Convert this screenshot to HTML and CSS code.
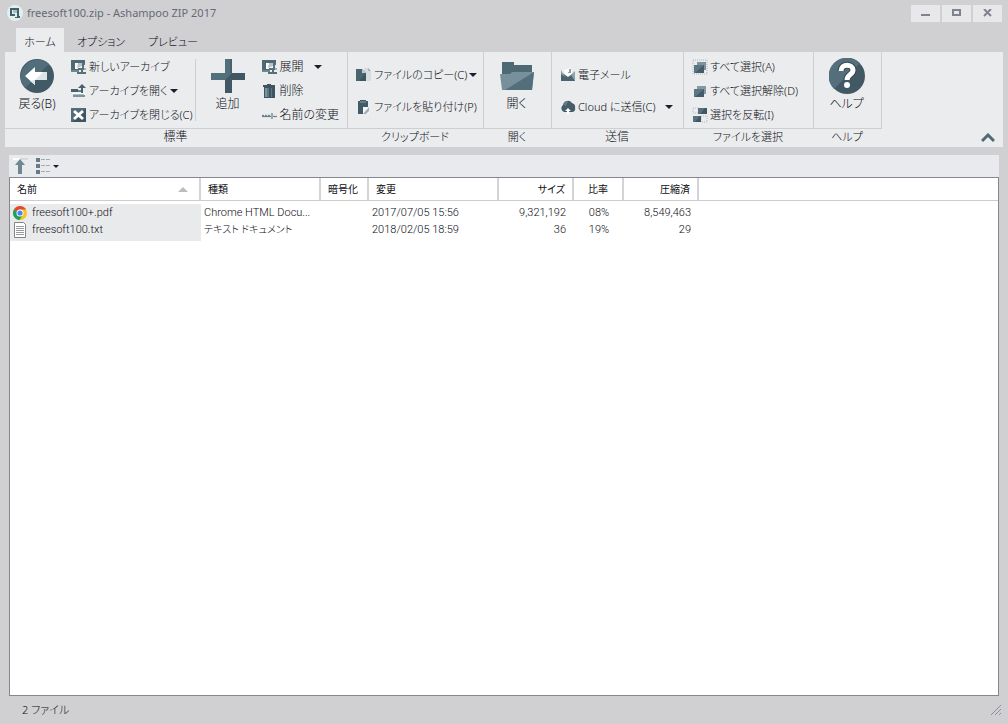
FILE: index.html
```html
<!DOCTYPE html>
<html lang="ja">
<head>
<meta charset="utf-8">
<title>freesoft100.zip - Ashampoo ZIP 2017</title>
<link rel="stylesheet" href="styles.css">
</head>
<body>
<svg class="defs" aria-hidden="true">
  <symbol id="clamp" viewBox="0 0 16 16">
    <path fill="#4f6872" d="M0 1h14v3H4v6h4v3H0z"/>
    <path fill="#6f8892" d="M0 11h8v2H0z"/>
    <path fill="#f8fafb" d="M4 4h7v6H4z"/>
    <path fill="#b4c4ca" d="M7 4h4v3L6 9z"/>
    <path fill="#587079" d="M11 4h3v2h-1v3h2v2h-3v2h3v2H6v-2h4v-2H7V9h4z"/>
    <path fill="#a2b2b8" d="M13 9h2v2h-2z"/>
  </symbol>
  <symbol id="caret" viewBox="0 0 8 4"><path fill="#1d1d2b" d="M0 0h8L4 4z"/></symbol>
</svg>
<div class="window">
  <header class="titlebar">
    <svg class="app-icon" viewBox="0 0 16 16"><circle cx="8" cy="8" r="8" fill="#e3eeef"/><path fill="#3f606c" d="M3 3h9v2H5v4h3v2H3z"/><path fill="#a5bfc8" d="M6 5h4v3H6z"/><path fill="#3f606c" d="M10 5h2v6h1v2H8v-1h2z"/></svg>
    <h1 class="title">freesoft100.zip - Ashampoo ZIP 2017</h1>
    <div class="window-buttons">
      <button class="window-button" aria-label="最小化"><svg viewBox="0 0 10 8"><path fill="#7f8390" d="M0 5h9v2H0z"/></svg></button>
      <button class="window-button" aria-label="最大化"><svg viewBox="0 0 10 8"><path fill="none" stroke="#7f8390" stroke-width="2" d="M1 1h7v5H1z"/></svg></button>
      <button class="window-button" aria-label="閉じる"><svg viewBox="0 0 10 8"><path stroke="#7f8390" stroke-width="2" d="M1 0l7 7M8 0L1 7"/></svg></button>
    </div>
  </header>

  <nav class="tabs" role="tablist">
    <button class="tab tab-active" role="tab" aria-selected="true">ホーム</button>
    <button class="tab" role="tab">オプション</button>
    <button class="tab" role="tab">プレビュー</button>
  </nav>

  <div class="ribbon">
    <section class="group">
      <div class="group-body group-standard">
        <button class="big">
          <svg class="icon-big" viewBox="0 0 36 36"><circle cx="18" cy="18" r="17" fill="#425a65"/><path fill="#536e7a" d="M6 30A17 17 0 0 1 30 6z"/><path fill="#fff" d="M6 18l10-9v5h12v8H16v5z"/><path fill="#dfe4e6" d="M16 22l8-8h4v8zM16 22v5l-5-4z"/></svg>
          <span>戻る(B)</span>
        </button>
        <div class="stack">
          <button class="small"><svg class="icon"><use href="#clamp"/></svg><span>新しいアーカイブ</span></button>
          <button class="small"><svg class="icon" viewBox="0 0 16 16"><path fill="#48616c" d="M0 6h7v3H0zM11 1l4 4h-3v5h-2V5H7z"/><path fill="#6b828c" d="M7 7h3v2H7z"/><path fill="#fff" d="M1 10h13v1H1z"/><path fill="#a9b8be" d="M2 11h11v1H2z"/><path fill="#7e939c" d="M2 12h12v2H2z"/></svg><span>アーカイブを開く</span><svg class="caret caret-near"><use href="#caret"/></svg></button>
          <button class="small"><svg class="icon" viewBox="0 0 16 16"><path fill="#536d78" d="M0 1h15v14H0z"/><path fill="#3f5661" d="M15 1v14H1z"/><path stroke="#fff" stroke-width="3" d="M3 4l9 8M12 4l-9 8"/></svg><span>アーカイブを閉じる(C)</span></button>
        </div>
        <div class="separator"></div>
        <button class="big">
          <svg class="icon-big" viewBox="0 0 36 36"><path fill="#536f7b" d="M15 1h7v14h13v7H22v13h-7V22H1v-7h14z"/><path fill="#405863" d="M22 15h13v7H22v13h-7V22z"/><path fill="#48616c" d="M20 1h2v14h-2z"/></svg>
          <span>追加</span>
        </button>
        <div class="stack">
          <button class="small"><svg class="icon"><use href="#clamp"/></svg><span class="kanji">展開</span><svg class="caret"><use href="#caret"/></svg></button>
          <button class="small"><svg class="icon" viewBox="0 0 16 16"><path fill="#3e545f" d="M1 2h4V1h4v1h4v2H1zM2 4h11v11H2z"/><path fill="#7895a0" d="M3 5h2v9H3z"/><path fill="#5e7985" d="M5 5h2v9H5zM9 5h1v9H9z"/></svg><span class="kanji">削除</span></button>
          <button class="small"><svg class="icon" viewBox="0 0 16 16"><path fill="#dde2e4" d="M0 7h15v4H0z"/><path fill="#6b8089" d="M0 8h2v1H0zM3 8h2v1H3zM6 8h2v1H6zM0 9h9v1H0zM11 9h4v1h-4z"/><path fill="#9aa8ae" d="M9 6h2v6H9z"/></svg><span class="kanji">名前の変更</span></button>
        </div>
      </div>
      <h2 class="group-title kanji">標準</h2>
    </section>

    <section class="group">
      <div class="group-body group-pair">
        <button class="small"><svg class="icon" viewBox="0 0 16 16"><path fill="#d4dcdf" d="M8 1h4l3 3v10H8z"/><path fill="#a1b0b6" d="M12 1l3 3h-3z"/><path fill="#4b6570" d="M0 2h6l4 4v8H0z"/><path fill="#3e5560" d="M10 6v8H3z"/><path fill="#c0cbd0" d="M6 2l4 4H6z"/></svg><span>ファイルのコピー(C)</span><svg class="caret caret-near"><use href="#caret"/></svg></button>
        <button class="small"><svg class="icon" viewBox="0 0 16 16"><path fill="#435b66" d="M2 2h2V1h6v1h2v13H2z"/><path fill="#637e8a" d="M4 2h6v2H4z"/><path fill="#f4f7f8" d="M7 8h6v7H7z"/><path fill="#9fb0b7" d="M13 8v4l-3 3H7z"/></svg><span>ファイルを貼り付け(P)</span></button>
      </div>
      <h2 class="group-title">クリップボード</h2>
    </section>

    <section class="group">
      <div class="group-body group-single">
        <button class="big">
          <svg class="icon-big" viewBox="0 0 36 36"><path fill="#4e6974" d="M3 4h12v3h18v13H3z"/><path fill="#78909b" d="M1 16h10l2-2h22l-2 18H3z"/><path fill="#536f7b" d="M35 14l-2 18H6z"/></svg>
          <span>開く</span>
        </button>
      </div>
      <h2 class="group-title">開く</h2>
    </section>

    <section class="group">
      <div class="group-body group-pair">
        <button class="small"><svg class="icon" viewBox="0 0 16 16"><path fill="#fff" d="M4 3l7-2 2 8H5z"/><path fill="#8fa0a8" d="M9 2h2v4H8V5h1z"/><path fill="#4b6570" d="M1 5l7 5 7-5v9H1z"/><path fill="#8fa2aa" d="M1 3v4l4 3zM15 4v10l-4-6z"/></svg><span>電子メール</span></button>
        <button class="small"><svg class="icon" viewBox="0 0 16 16"><path fill="#455d68" d="M4 13a4 4 0 0 1-1-7 5 5 0 0 1 9-2 4 4 0 0 1 3 5 3 3 0 0 1-3 4z"/><path fill="#657e89" d="M8 2a4 4 0 0 0-4 4l2 1z"/><path fill="#fff" d="M8 9l3 3H9v3H7v-3H5z"/></svg><span>Cloud に送信(C)</span><svg class="caret"><use href="#caret"/></svg></button>
      </div>
      <h2 class="group-title kanji">送信</h2>
    </section>

    <section class="group">
      <div class="group-body group-select">
        <div class="stack">
          <button class="small"><svg class="icon" viewBox="0 0 16 16"><path fill="none" stroke="#acb4b8" stroke-dasharray="1 1" d="M1 1h14v14H1z"/><path fill="#7d929c" d="M5 3h9v8H5z"/><path fill="#435c67" d="M2 6h10v8H2z"/><path fill="#5b7681" d="M2 6h10l-9 8H2z"/></svg><span>すべて選択(A)</span></button>
          <button class="small"><svg class="icon" viewBox="0 0 16 16"><path fill="#8599a2" d="M5 3h9v8H5z"/><path fill="#435c67" d="M2 6h10v8H2z"/><path fill="#5b7681" d="M2 6h10l-9 8H2z"/></svg><span>すべて選択解除(D)</span></button>
          <button class="small"><svg class="icon" viewBox="0 0 16 16"><path fill="none" stroke="#b3babd" stroke-dasharray="1 1" d="M1 1h6v5H1zM9 9h6v6H9z"/><path fill="#405863" d="M6 1h9v6H6zM1 9h8v6H1z"/><path fill="#58727d" d="M6 1h7L8 7H6zM1 9h7l-5 6H1z"/></svg><span>選択を反転(I)</span></button>
        </div>
      </div>
      <h2 class="group-title">ファイルを選択</h2>
    </section>

    <section class="group">
      <div class="group-body group-single">
        <button class="big">
          <svg class="icon-big" viewBox="0 0 36 36"><circle cx="18" cy="18" r="18" fill="#425963"/><path fill="#546f7b" d="M5 31A18 18 0 0 1 31 5z"/><path fill="none" stroke="#334a56" stroke-width="7" d="M12 13c0-8 12-7 12-1 0 5-6 4-6 10"/><path fill="none" stroke="#fff" stroke-width="5" d="M12 13c0-8 12-7 12-1 0 5-6 4-6 10"/><circle cx="18" cy="27" r="3" fill="#fff"/></svg>
          <span>ヘルプ</span>
        </button>
      </div>
      <h2 class="group-title">ヘルプ</h2>
    </section>

    <button class="collapse" aria-label="リボンを折りたたむ"><svg viewBox="0 0 14 10"><path fill="none" stroke="#4f6975" stroke-width="3" d="M1 8l6-6 6 6"/></svg></button>
  </div>

  <main class="browser">
    <div class="toolbar">
      <button class="tool" aria-label="上へ"><svg class="icon" viewBox="0 0 16 16"><path fill="#fff" d="M1 0h7v2H1z"/><path fill="#d5dadd" d="M8 0h8v2H8z"/><path fill="#6f8791" d="M8 1l5 6h-3v9H6V7H3z"/></svg></button>
      <button class="tool" aria-label="表示"><svg class="icon" viewBox="0 0 16 16"><path fill="#647c87" d="M1 0h4v4H1zM1 6h4v4H1zM1 12h4v4H1z"/><path stroke="#a3abb0" stroke-dasharray="4 1" d="M6 1.500h9M6 7.500h9M6 13.500h9"/></svg><svg class="caret-small"><use href="#caret"/></svg></button>
    </div>
    <div class="list">
      <table class="files">
        <colgroup><col class="col-name"><col class="col-type"><col class="col-lock"><col class="col-date"><col class="col-size"><col class="col-ratio"><col class="col-size"><col></colgroup>
        <thead>
          <tr>
            <th class="sorted"><div class="sort-head">名前<svg viewBox="0 0 10 5"><path fill="#bdbdbd" d="M0 5h10L5 0z"/></svg></div></th>
            <th>種類</th><th>暗号化</th><th>変更</th><th class="num">サイズ</th><th class="mid">比率</th><th class="num">圧縮済</th><th class="rest"></th>
          </tr>
        </thead>
        <tbody>
          <tr>
            <td class="name"><div class="file"><svg class="file-icon" viewBox="0 0 16 16"><circle cx="8" cy="8" r="7" fill="#f9c51a"/><path fill="#df4937" d="M8 8L1.900 4.500A7 7 0 0 1 14.100 4.500H8z"/><path fill="#20a05b" d="M8 8L1.900 4.500A7 7 0 0 0 7.500 15L11 9.500z"/><circle cx="8" cy="8" r="3.500" fill="#fff"/><circle cx="8" cy="8" r="2.600" fill="#4285f4"/></svg>freesoft100+.pdf</div></td>
            <td>Chrome HTML Docu...</td><td></td><td>2017/07/05 15:56</td><td class="num">9,321,192</td><td class="mid">08%</td><td class="num">8,549,463</td><td></td>
          </tr>
          <tr>
            <td class="name"><div class="file"><svg class="file-icon" viewBox="0 0 16 16"><path fill="#fff" stroke="#858585" d="M2.500.5h9l2 2v13h-11z"/><path stroke="#9a9a9a" d="M4 4.500h8M4 6.500h8M4 8.500h8M4 10.500h8M4 12.500h8"/></svg>freesoft100.txt</div></td>
            <td class="kana">テキスト ドキュメント</td><td></td><td>2018/02/05 18:59</td><td class="num">36</td><td class="mid">19%</td><td class="num">29</td><td></td>
          </tr>
          <tr class="tail"><td class="name"></td><td colspan="7"></td></tr>
        </tbody>
      </table>
    </div>
  </main>

  <footer class="status">
    <span>2 ファイル</span>
    <svg class="grip" viewBox="0 0 12 12"><path stroke="#8c8f9b" d="M1 11L11 1M5 11l6-6M9 11l2-2"/></svg>
  </footer>
</div>
</body>
</html>
```
FILE: styles.css
```css
* { box-sizing: border-box; }

body {
  margin: 0;
  font-family: "Noto Sans", "Noto Sans CJK JP", sans-serif;
  font-size: 12px;
  font-weight: 300;
  line-height: 16px;
  font-feature-settings: "palt";
  color: #0c0e14;
  background: #d0d0d2;
}

button {
  margin: 0;
  padding: 0;
  border: 0;
  background: none;
  font: inherit;
  color: inherit;
}

h1, h2 { margin: 0; font-weight: inherit; }
svg { display: block; flex: none; }
.defs { position: absolute; width: 0; height: 0; }

.window {
  display: flex;
  flex-direction: column;
  min-height: 100vh;
}

/* Title bar and tabs */
.titlebar {
  display: flex;
  align-items: center;
  gap: 4px;
  height: 28px;
  padding: 0 6px 2px 7px;
}
.app-icon { width: 16px; height: 16px; }
.title { font-size: 11px; font-weight: 400; color: #666a78; }
.window-buttons { display: flex; gap: 2px; margin-left: auto; }
.window-button {
  display: grid;
  place-items: center;
  width: 29px;
  height: 17px;
  background: #e8e8ea;
}
.window-button svg { width: 10px; height: 8px; }

.tabs { display: flex; height: 24px; padding-left: 16px; }
.tab { width: 72px; padding: 3px 0 0 2px; font-size: 11px; }
.tab:first-child { width: 48px; padding-left: 0; }
.tab-active { background: #ebecee; }

/* Ribbon */
.ribbon {
  display: grid;
  grid-template-columns: 343px 136px 68px 132px 130px 68px 1fr;
  margin: 0 5px;
  background: #ebecee;
}
.group { display: flex; flex-direction: column; }
.group-body {
  display: flex;
  height: 77px;
  border-right: 1px solid #cfcfd2;
  border-bottom: 1px solid #cfcfd2;
  white-space: nowrap;
}
.group-title {
  height: 18px;
  padding-right: 2px;
  font-size: 11px;
  line-height: 16px;
  text-align: center;
}
.group-standard { padding: 0 4px; }
.group-single { justify-content: center; padding-right: 2px; }
.group-pair {
  flex-direction: column;
  align-items: flex-start;
  gap: 16px;
  padding: 15px 0 0 8px;
}
.group-select { padding-left: 2px; }

.big {
  display: flex;
  flex-direction: column;
  align-items: center;
  gap: 2px;
  width: 56px;
  padding-top: 6px;
}
.icon-big { width: 36px; height: 36px; }
.stack {
  display: flex;
  flex-direction: column;
  align-items: flex-start;
  gap: 8px;
  padding: 7px 0 0 6px;
}
.small {
  display: flex;
  align-items: center;
  gap: 2px;
  height: 16px;
  font-size: 11px;
}
.icon { width: 16px; height: 16px; }
.group-title.kanji, .kanji { font-size: 12px; }
.caret { width: 8px; height: 4px; margin-left: 8px; }
.caret-near { margin-left: 0; }
.separator { width: 1px; margin: 7px 4px 7px 2px; background: #cfcfd2; }
.collapse { place-self: end; padding: 4px 8px; }
.collapse svg { width: 14px; height: 10px; }

/* File list */
.browser {
  display: flex;
  flex: 1;
  flex-direction: column;
  margin: 8px 9px 0;
}
.toolbar {
  display: flex;
  align-items: center;
  gap: 7px;
  height: 22px;
  padding-left: 3px;
  background: #e9eaee;
}
.tool { display: flex; align-items: center; gap: 2px; }
.caret-small { width: 6px; height: 3px; }
.list {
  flex: 1;
  border: 1px solid #838790;
  background: #fff;
}
.files {
  width: 100%;
  table-layout: fixed;
  border-collapse: separate;
  border-spacing: 0;
  font-family: Roboto, "Noto Sans CJK JP", sans-serif;
  font-size: 11px;
  line-height: 17px;
  white-space: nowrap;
}
.col-name { width: 191px; }
.col-type { width: 120px; }
.col-lock { width: 48px; }
.col-date { width: 130px; }
.col-size { width: 75px; }
.col-ratio { width: 50px; }
th {
  height: 23px;
  padding: 0 7px;
  border-right: 2px solid #d4d4d6;
  border-bottom: 1px solid #cccccf;
  font-size: 10px;
  font-weight: 400;
  text-align: left;
}
.rest { border-right: 0; }
.sort-head { display: flex; align-items: center; justify-content: space-between; padding-right: 4px; }
.sort-head svg { width: 10px; height: 5px; }
td { height: 17px; padding: 0 8px 0 3px; }
tbody tr:first-child td { height: 20px; padding-top: 3px; }
td.name { padding: 0; background: #e9eaec; }
tbody tr:first-child .name { background-clip: content-box; }
.file { display: flex; align-items: center; gap: 4px; padding-left: 2px; }
.file-icon { width: 16px; height: 16px; }
.kana { font-size: 10px; }
th.num, td.num { text-align: right; }
th.mid, td.mid { padding: 0 2px; text-align: center; }
.tail td { height: 3px; }

/* Status bar */
.status {
  display: flex;
  align-items: center;
  justify-content: space-between;
  height: 28px;
  padding: 0 6px 0 22px;
  font-size: 11px;
}
.grip { width: 12px; height: 12px; }
```
